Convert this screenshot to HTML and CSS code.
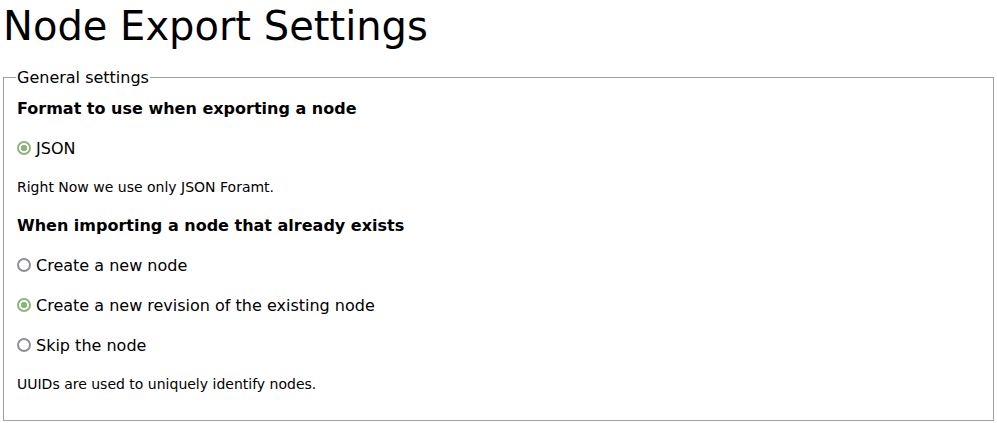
FILE: index.html
```html
<!DOCTYPE html>
<html>
<head>
<meta charset="utf-8">
<title>Node Export Settings</title>
<link rel="stylesheet" href="styles.css">
</head>
<body>
<h1 class="title">Node Export Settings</h1>
<form>
<fieldset class="group">
  <legend class="legend">General settings</legend>
  <div class="item">
    <h4 class="label">Format to use when exporting a node</h4>
    <label class="option"><input type="radio" class="radio" name="format" checked> JSON</label>
    <div class="desc">Right Now we use only JSON Foramt.</div>
  </div>
  <div class="item">
    <h4 class="label">When importing a node that already exists</h4>
    <label class="option"><input type="radio" class="radio" name="import"> Create a new node</label>
    <label class="option"><input type="radio" class="radio" name="import" checked> Create a new revision of the existing node</label>
    <label class="option"><input type="radio" class="radio" name="import"> Skip the node</label>
    <div class="desc">UUIDs are used to uniquely identify nodes.</div>
  </div>
</fieldset>
</form>
</body>
</html>
```
FILE: styles.css
```css
html, body {
  margin: 0;
  padding: 0;
  background: #fff;
  color: #000;
  font-family: "DejaVu Sans", sans-serif;
}
body {
  padding: 0 3px;
}
.title {
  font-size: 40px;
  font-weight: normal;
  margin: 0;
  line-height: 52px;
}
.group {
  margin: 16px 0 0 0;
  border: 1px solid #a0a0a0;
  padding: 0 12px 19px 13px;
}
.legend {
  font-size: 16px;
  padding: 0 1px;
  margin-left: -1px;
}
.item {
  display: flex;
  flex-direction: column;
}
.label {
  font-size: 16px;
  font-weight: bold;
  margin: 12px 0 10px;
}
.option {
  display: flex;
  align-items: center;
  gap: 5px;
  font-size: 16px;
  height: 40px;
}
.radio {
  appearance: none;
  -webkit-appearance: none;
  margin: 0;
  width: 14px;
  height: 14px;
  border: 2px solid #8f8f9d;
  border-radius: 50%;
  box-sizing: border-box;
  background: #fff;
}
.radio:checked {
  border-color: #8db57a;
  background: radial-gradient(circle, #8db57a 0 3px, #fff 3.5px);
}
.desc {
  font-size: 14px;
  margin: 11px 0 9px;
}
```
